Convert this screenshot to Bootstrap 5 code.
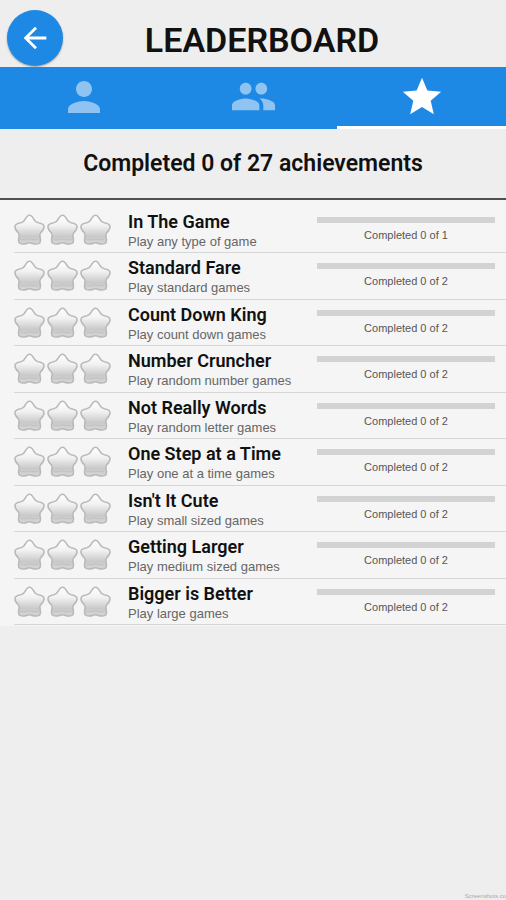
<!DOCTYPE html>
<html lang="en">
<head>
<meta charset="utf-8">
<meta name="viewport" content="width=device-width, initial-scale=1">
<title>Leaderboard</title>
<link href="https://cdn.jsdelivr.net/npm/bootstrap@5.3.0/dist/css/bootstrap.min.css" rel="stylesheet">
<style>
  body { background: #eee; font-family: Roboto, sans-serif; color: #111; }
  .app-head { height: 67px; padding: 10px 7px 0; }
  .back-btn { width: 56px; height: 56px; background: #1e88e5; box-shadow: 0 1px 2px rgba(0,0,0,.35); }
  .app-title { font-size: 34px; line-height: 40px; font-weight: 600; padding-top: 10px; padding-right: 38px; }
  .tab-bar { background: #1e88e5; height: 62px; }
  .tab-btn { border: 0; border-bottom: 3px solid transparent; background: none; color: #fff; padding: 0; }
  .tab-btn svg { opacity: .5; }
  .tab-btn.active { border-bottom-color: #fff; }
  .tab-btn.active svg { opacity: 1; }
  .summary { font-size: 23px; line-height: 69px; font-weight: 600; border-bottom: 2px solid #505050; }
  .goals { background: #f5f5f5; padding: 7px 0 1px 14px; }
  .goal { height: 47px; border-bottom: 1px solid #d6d6d6; }
  .goal:nth-child(odd) { height: 46px; }
  .stars { width: 114px; gap: 2px; padding-top: 7px; }
  .goal-name { font-size: 18px; line-height: 22px; font-weight: 600; padding-top: 4px; }
  .goal-note { font: 13px/18px "Liberation Sans", Arial, sans-serif; color: #666; }
  .goal-side { width: 178px; margin-right: 11px; padding-top: 10px; }
  .goal-side .progress { height: 6px; background: #d3d3d3; border-radius: 0; }
  .goal-count { font: 11px/16px "Liberation Sans", Arial, sans-serif; color: #555; padding-top: 4px; }
  .credit { font: 6px/7px "Liberation Sans", Arial, sans-serif; color: #aaa; }
</style>
</head>
<body class="d-flex flex-column min-vh-100">
<svg width="0" height="0" class="position-absolute" aria-hidden="true">
  <defs>
    <linearGradient id="silver" x1="0" y1="0" x2="0" y2="1">
      <stop offset="0" stop-color="#fff"/><stop offset=".35" stop-color="#f2f2f2"/><stop offset=".74" stop-color="#c9c9c9"/><stop offset="1" stop-color="#d6d6d6"/>
    </linearGradient>
    <symbol id="star" viewBox="0 0 32 32">
      <path d="M16 1.200C18 1.200 19.300 3 20.600 5.600Q22 8.600 25 9.100C28 9.500 31 10.600 31 13.300C31 15.800 29.300 17.500 27.500 19.500Q26.400 21 26.800 23.500C27.600 26.500 27.800 29.200 25.800 30.300C23.500 31.400 20.500 30.900 18.300 30.100Q16 29.300 13.700 30.100C11.500 30.900 8.500 31.400 6.200 30.300C4.200 29.200 4.400 26.500 5.200 23.500Q5.600 21 4.500 19.500C2.700 17.500 1 15.800 1 13.300C1 10.600 4 9.500 7 9.100Q10 8.600 11.400 5.600C12.700 3 14 1.200 16 1.200Z" fill="url(#silver)" stroke="#b9b9b9" stroke-width="1.600"/>
      <path d="M7 26.500H12.500L16 25.500L19.500 26.500H25" fill="none" stroke="#c0c0c0"/>
    </symbol>
  </defs>
</svg>
<header class="app-head d-flex align-items-start">
  <button type="button" class="back-btn btn rounded-circle border-0 p-0 flex-shrink-0 d-flex align-items-center justify-content-center" aria-label="Back">
    <svg width="34" height="34" viewBox="0 0 24 24" fill="#fff"><path d="M20 11H7.830l5.590-5.590L12 4l-8 8 8 8 1.410-1.410L7.830 13H20z"/></svg>
  </button>
  <h1 class="app-title flex-grow-1 text-center mb-0 ps-0">LEADERBOARD</h1>
</header>
<nav class="tab-bar d-flex" aria-label="Leaderboard sections">
  <button type="button" class="tab-btn flex-fill w-100 d-flex align-items-center justify-content-center" aria-label="Player">
    <svg width="48" height="48" viewBox="0 0 24 24" fill="#fff"><path d="M12 12c2.210 0 4-1.790 4-4s-1.790-4-4-4-4 1.790-4 4 1.790 4 4 4zm0 2c-2.670 0-8 1.340-8 4v2h16v-2c0-2.660-5.330-4-8-4z"/></svg>
  </button>
  <button type="button" class="tab-btn flex-fill w-100 d-flex align-items-center justify-content-center" aria-label="Friends">
    <svg width="47" height="47" viewBox="0 0 24 24" fill="#fff"><path d="M16 11c1.660 0 2.990-1.340 2.990-3S17.660 5 16 5s-3 1.340-3 3 1.340 3 3 3zm-8 0c1.660 0 2.990-1.340 2.990-3S9.660 5 8 5 5 6.340 5 8s1.340 3 3 3zm0 2c-2.330 0-7 1.170-7 3.500V19h14v-2.500c0-2.330-4.670-3.500-7-3.500zm8 0c-.29 0-.62.02-.97.050 1.160.84 1.970 1.970 1.970 3.450V19h6v-2.500c0-2.330-4.670-3.500-7-3.500z"/></svg>
  </button>
  <button type="button" class="tab-btn active flex-fill w-100 d-flex align-items-center justify-content-center" aria-label="Achievements" aria-current="page">
    <svg width="46" height="46" viewBox="0 0 24 24" fill="#fff"><path d="M12 17.270L18.180 21l-1.640-7.030L22 9.240l-7.190-.61L12 2 9.190 8.630 2 9.240l5.460 4.730L5.820 21z"/></svg>
  </button>
</nav>
<main>
  <h2 class="summary text-center mb-0">Completed 0 of 27 achievements</h2>
  <ul class="goals list-unstyled mb-0" id="goals"></ul>
</main>
<footer class="credit mt-auto text-end">Screenshots.co</footer>
<script src="https://cdn.jsdelivr.net/npm/bootstrap@5.3.0/dist/js/bootstrap.bundle.min.js"></script>
<script>
  const goals = [
    ["In The Game", "Play any type of game", 1],
    ["Standard Fare", "Play standard games", 2],
    ["Count Down King", "Play count down games", 2],
    ["Number Cruncher", "Play random number games", 2],
    ["Not Really Words", "Play random letter games", 2],
    ["One Step at a Time", "Play one at a time games", 2],
    ["Isn't It Cute", "Play small sized games", 2],
    ["Getting Larger", "Play medium sized games", 2],
    ["Bigger is Better", "Play large games", 2]
  ];
  const star = '<svg width="31" height="31" aria-hidden="true"><use href="#star"/></svg>';
  document.getElementById("goals").innerHTML = goals.map(([name, note, total]) => `
    <li class="goal d-flex">
      <div class="stars d-flex flex-shrink-0">${star.repeat(3)}</div>
      <div class="flex-grow-1">
        <div class="goal-name">${name}</div>
        <div class="goal-note">${note}</div>
      </div>
      <div class="goal-side flex-shrink-0 text-center">
        <div class="progress" role="progressbar" aria-label="${name}" aria-valuenow="0" aria-valuemin="0" aria-valuemax="${total}"></div>
        <div class="goal-count">Completed 0 of ${total}</div>
      </div>
    </li>`).join("");
</script>
</body>
</html>
